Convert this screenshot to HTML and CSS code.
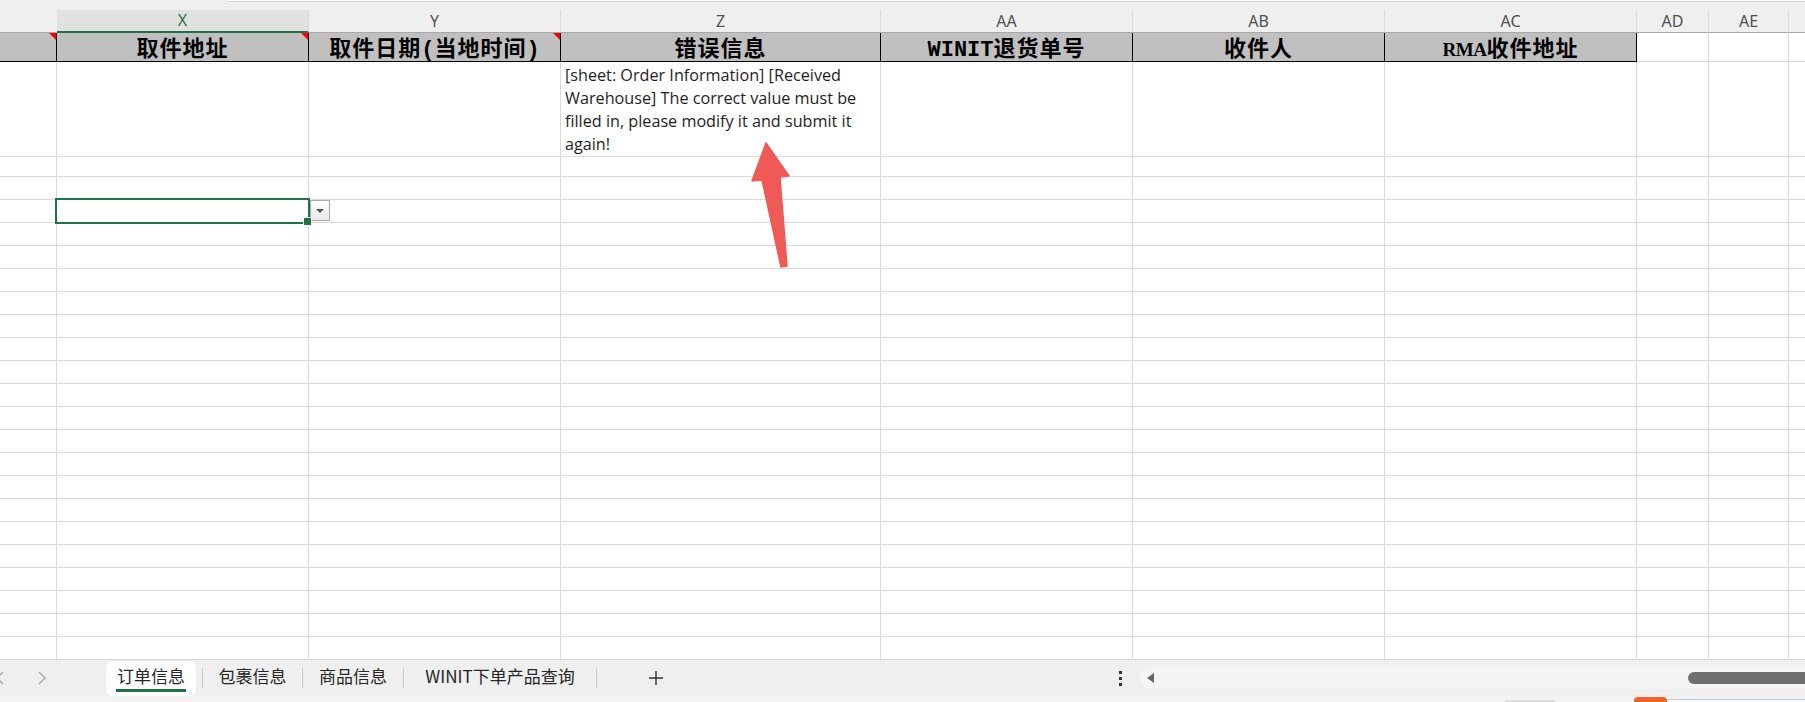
FILE: index.html
```html
<!DOCTYPE html>
<html lang="zh">
<head>
<meta charset="utf-8">
<title>订单信息</title>
<link rel="stylesheet" href="styles.css">
</head>
<body>
<div class="page">
  <div class="topstrip"><div class="topbox"></div></div>

  <div class="sheet">
    <div class="r colhead">
      <div></div>
      <div class="cur">X</div>
      <div>Y</div>
      <div>Z</div>
      <div>AA</div>
      <div>AB</div>
      <div>AC</div>
      <div>AD</div>
      <div>AE</div>
      <div class="last"></div>
    </div>

    <div class="r hdr">
      <div class="flag"></div>
      <div class="flag">取件地址</div>
      <div class="flag">取件日期<span class="mono">(</span>当地时间<span class="mono">)</span></div>
      <div>错误信息</div>
      <div><span class="mono">WINIT</span>退货单号</div>
      <div>收件人</div>
      <div><span class="lat">RMA</span>收件地址</div>
      <div class="blank"></div>
      <div class="blank"></div>
      <div class="blank last"></div>
    </div>

    <div class="r row1">
      <div></div>
      <div></div>
      <div></div>
      <div class="msg">[sheet: Order Information] [Received Warehouse] The correct value must be filled in, please modify it and submit it again!</div>
      <div></div>
      <div></div>
      <div></div>
      <div></div>
      <div></div>
      <div class="last"></div>
    </div>

    <div class="r rows">
      <div></div>
      <div><div class="sel"><div class="dd"><span class="tri"></span></div></div></div>
      <div></div>
      <div></div>
      <div></div>
      <div></div>
      <div></div>
      <div></div>
      <div></div>
      <div class="last"></div>
    </div>
  </div>

  <div class="tabbar">
    <div class="nav">
      <svg class="chev chev-l" width="10" height="14" viewBox="0 0 10 14"><path d="M8 1 L2 7 L8 13" fill="none" stroke="#a6a6a6" stroke-width="1.4"/></svg>
      <svg class="chev chev-r" width="10" height="14" viewBox="0 0 10 14"><path d="M2 1 L8 7 L2 13" fill="none" stroke="#a6a6a6" stroke-width="1.4"/></svg>
    </div>
    <div class="tab active">订单信息</div>
    <div class="sep first"></div>
    <div class="tab w99">包裹信息</div>
    <div class="sep"></div>
    <div class="tab w100">商品信息</div>
    <div class="sep"></div>
    <div class="tab w192">WINIT下单产品查询</div>
    <div class="sep"></div>
    <div class="add">
      <svg width="16" height="16" viewBox="0 0 16 16"><path d="M8 1 V15 M1 8 H15" stroke="#333" stroke-width="1.4"/></svg>
    </div>
    <div class="more"><i></i><i></i><i></i></div>
    <div class="track">
      <span class="larr"></span>
      <span class="thumb"></span>
    </div>
  </div>

  <div class="bottomstrip">
    <span class="bs-gray"></span>
    <span class="bs-orange"></span>
    <span class="bs-win"></span>
  </div>

  <svg class="arrow" width="1805" height="702" viewBox="0 0 1805 702">
    <polygon points="766,143 789,176 780,177 787,266 781,267 762,180 752,181" fill="#ef5a56" stroke="#ef5a56" stroke-width="1.5" stroke-linejoin="round"/>
  </svg>
</div>
</body>
</html>
```

FILE: styles.css
```css
* { box-sizing: border-box; }

html, body {
  margin: 0;
  padding: 0;
  background: #fff;
}

body {
  width: 1805px;
  height: 702px;
  overflow: hidden;
  font-family: "Noto Sans", "Noto Sans CJK SC", sans-serif;
}

.page {
  position: relative;
  width: 1805px;
  height: 702px;
  display: flex;
  flex-direction: column;
}

/* ---------- top strip ---------- */
.topstrip {
  height: 10px;
  flex: none;
  background: #efefef;
  display: flex;
}
.topbox {
  margin-left: 227px;
  flex: 1;
  height: 2px;
  background: #fff;
  border-bottom: 1px solid #d6d6d6;
}

/* ---------- sheet ---------- */
.sheet {
  height: 649px;
  flex: none;
  overflow: hidden;
}

.r {
  display: grid;
  grid-template-columns: 57px 252px 252px 320px 252px 252px 252px 72px 80px 1fr;
}

/* column letters */
.colhead {
  height: 23px;
  background: #efefef;
}
.colhead > div {
  border-right: 1px solid #dadada;
  border-bottom: 1px solid #a8a8a8;
  font-family: "Noto Sans", sans-serif;
  font-size: 16px;
  line-height: 22px;
  color: #505050;
  text-align: center;
}
.colhead > div:first-child { border-right-color: #efefef; }
.colhead > .cur {
  background: #e1e1e1;
  color: #217346;
  border-bottom: 2px solid #217346;
  line-height: 21px;
}
.colhead > .last { border-right: 0; }

/* header labels */
.hdr { height: 29px; }
.hdr > div {
  position: relative;
  background: #c0c0c0;
  border-right: 1px solid #000;
  border-bottom: 1px solid #000;
  font-family: "Liberation Serif", "Noto Sans CJK SC", serif;
  font-weight: 700;
  font-size: 22px;
  letter-spacing: 1px;
  line-height: 27px;
  padding-top: 2px;
  color: #000;
  text-align: center;
  white-space: nowrap;
  overflow: hidden;
}
.hdr > .blank {
  background: #fff;
  border-right: 1px solid #dadada;
  border-bottom: 1px solid #dadada;
}
.hdr > .last { border-right: 0; }
.hdr .mono {
  font-family: "Liberation Mono", monospace;
  font-size: 22px;
  letter-spacing: 0;
}
.hdr .lat {
  font-family: "Liberation Serif", serif;
  font-size: 19px;
  letter-spacing: -0.5px;
}
.flag::after {
  content: "";
  position: absolute;
  top: 0;
  right: 0;
  width: 0;
  height: 0;
  border-top: 7px solid #ff0000;
  border-left: 7px solid transparent;
}

/* first data row */
.row1 { height: 92px; }
.row1 > div {
  border-right: 1px solid #dadada;
  border-bottom: 1px solid #dadada;
}
.row1 > .last { border-right: 0; }
.msg {
  padding: 2px 3px 0 4px;
  font-family: "Open Sans", "Noto Sans CJK SC", sans-serif;
  font-size: 16.2px;
  line-height: 23px;
  color: #1e1e1e;
}

/* empty rows */
.rows { height: 505px; }
.rows > div {
  border-right: 1px solid #dadada;
  background-image: repeating-linear-gradient(to bottom, transparent 0, transparent 22px, #dadada 22px, #dadada 23px);
}
.rows > .last { border-right: 0; }

.sel {
  position: relative;
  margin-top: 46px;
  height: 23px;
}
.sel::before {
  content: "";
  position: absolute;
  left: -2px;
  right: -2px;
  top: -2px;
  bottom: -1px;
  border: 2px solid #217346;
}
.sel::after {
  content: "";
  position: absolute;
  right: -4px;
  bottom: -3px;
  width: 7px;
  height: 7px;
  background: #217346;
  border: 1px solid #fff;
}
.dd {
  position: absolute;
  left: calc(100% + 2px);
  top: 0;
  width: 20px;
  height: 21px;
  border: 1px solid #a9a9a9;
  background: linear-gradient(#ffffff, #e8e8ea);
  display: flex;
  align-items: center;
  justify-content: center;
}
.tri {
  width: 0;
  height: 0;
  border-top: 4px solid #555;
  border-left: 4px solid transparent;
  border-right: 4px solid transparent;
}

/* ---------- sheet tabs bar ---------- */
.tabbar {
  height: 37px;
  flex: none;
  background: #efefef;
  border-top: 1px solid #d6d6d6;
  display: flex;
  align-items: flex-start;
  font-family: "Noto Sans CJK SC", "Noto Sans", sans-serif;
  font-size: 17px;
  color: #262626;
}
.nav {
  width: 106px;
  height: 36px;
  flex: none;
  display: flex;
  align-items: center;
}
.chev-l { margin-left: -5px; }
.chev-r { margin-left: 32px; }

.tab {
  position: relative;
  height: 35px;
  margin-top: 1px;
  line-height: 29px;
  text-align: center;
  white-space: nowrap;
  flex: none;
}
.tab.active {
  width: 90px;
  background: #fff;
  border-radius: 5px;
  box-shadow: 0 0 1px rgba(0,0,0,0.18);
}
.tab.active::after {
  content: "";
  position: absolute;
  left: 10px;
  right: 10px;
  bottom: 4px;
  height: 3px;
  background: #1e7145;
}
.w99 { width: 99px; }
.w100 { width: 100px; }
.w192 { width: 192px; }

.sep {
  width: 1px;
  height: 20px;
  margin-top: 8px;
  background: #c8c8c8;
  flex: none;
}
.sep.first { margin-left: 6px; }

.add {
  width: 118px;
  height: 36px;
  flex: none;
  display: flex;
  align-items: center;
  justify-content: center;
}
.more {
  margin-left: 401px;
  width: 8px;
  height: 36px;
  flex: none;
  display: flex;
  flex-direction: column;
  align-items: center;
  justify-content: center;
  gap: 3px;
}
.more i {
  display: block;
  width: 3px;
  height: 3px;
  background: #333;
}
.track {
  margin-left: 16px;
  margin-top: 7px;
  flex: 1;
  height: 22px;
  background: #f5f5f5;
  border-radius: 11px 0 0 11px;
  display: flex;
  align-items: center;
  overflow: hidden;
}
.larr {
  margin-left: 7px;
  width: 0;
  height: 0;
  border-right: 7px solid #666;
  border-top: 5px solid transparent;
  border-bottom: 5px solid transparent;
}
.thumb {
  margin-left: auto;
  margin-right: -14px;
  width: 131px;
  height: 12px;
  border-radius: 6px;
  background: #6f6f6f;
  flex: none;
}

/* ---------- bottom strip ---------- */
.bottomstrip {
  height: 6px;
  flex: none;
  background: #f3f3f3;
  display: flex;
  align-items: flex-end;
}
.bs-gray {
  margin-left: 1505px;
  width: 50px;
  height: 2px;
  background: #dcdcdc;
}
.bs-orange {
  margin-left: 79px;
  width: 33px;
  height: 5px;
  background: #f0622a;
  border-radius: 4px 4px 0 0;
}
.bs-win {
  flex: 1;
  height: 3px;
  background: #fff;
  border-top: 1px solid #b9cbe6;
}

/* annotation arrow */
.arrow {
  position: absolute;
  left: 0;
  top: 0;
  pointer-events: none;
}
```
